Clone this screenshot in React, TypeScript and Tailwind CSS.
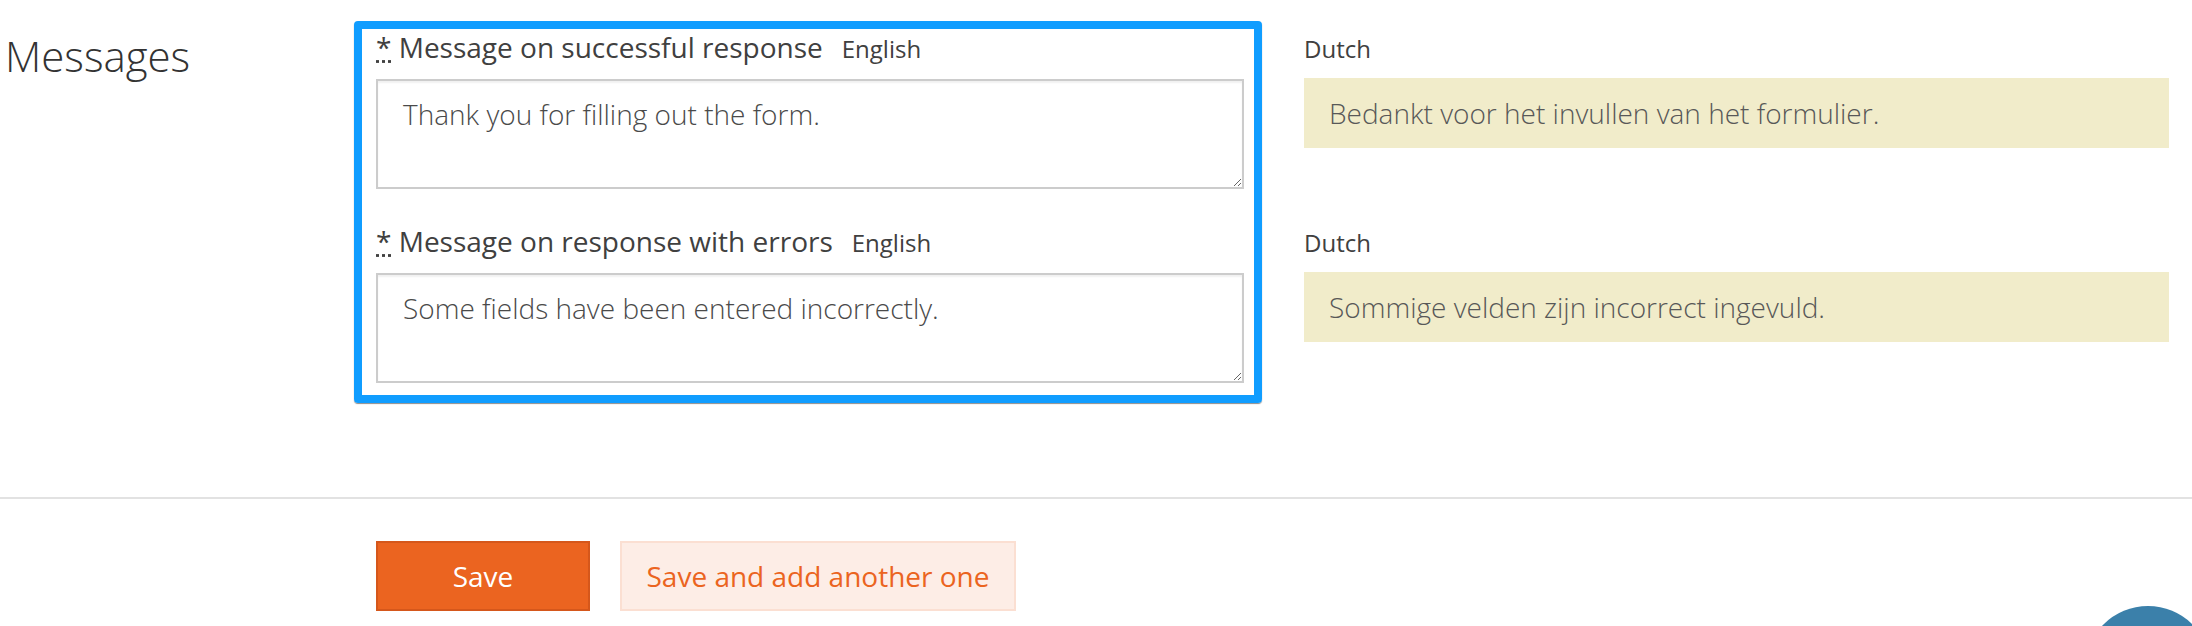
import React from 'react';

const FONT = "font-['Open_Sans','Liberation_Sans',sans-serif]";

type Field = {
  label: string;
  english: string;
  dutch: string;
};

const FIELDS: Field[] = [
  {
    label: 'Message on successful response',
    english: 'Thank you for filling out the form.',
    dutch: 'Bedankt voor het invullen van het formulier.',
  },
  {
    label: 'Message on response with errors',
    english: 'Some fields have been entered incorrectly.',
    dutch: 'Sommige velden zijn incorrect ingevuld.',
  },
];

const EnglishField: React.FC<{ field: Field }> = ({ field }) => (
  <div className="h-[160px] flex flex-col">
    <div className="h-[36px] flex items-baseline leading-[36px] text-[#404040] whitespace-nowrap">
      <span className="text-[28px]">
        <abbr title="required" className="underline decoration-dotted">*</abbr> {field.label}
      </span>
      <span className="text-[24px] ml-[19px]">English</span>
    </div>
    <textarea
      defaultValue={field.english}
      className="mt-[14px] w-[868px] h-[110px] border-2 border-[#cccccc] bg-white px-[25px] pt-[15px] text-[28px] leading-[37px] font-light text-[#4a4a4a] shadow-[inset_0_2px_2px_rgba(0,0,0,0.06)] outline-none"
    />
  </div>
);

const DutchField: React.FC<{ field: Field }> = ({ field }) => (
  <div className="h-[160px] flex flex-col">
    <div className="h-[36px] text-[24px] leading-[39px] text-[#404040]">Dutch</div>
    <div className="mt-[13px] h-[70px] bg-[#f1ecca] pl-[25px] pt-[17px] text-[28px] leading-[37px] font-light text-[#585858] whitespace-nowrap">
      {field.dutch}
    </div>
  </div>
);

const App: React.FC = () => {
  return (
    <div className={`relative h-[626px] w-full overflow-hidden bg-white ${FONT}`}>
      <div className="flex pt-[21px]">
        <div className="w-[354px] shrink-0 pl-[5px]">
          <h2 className="mt-[6px] text-[42px] leading-[57px] font-light text-[#333]">Messages</h2>
        </div>

        <div className="shrink-0 rounded-[4px] border-[8px] border-[#109dff] pl-[14px] pr-[10px] pb-[12px] shadow-[0_1px_1px_rgba(0,0,0,0.45)]">
          <div className="flex flex-col gap-[34px]">
            {FIELDS.map((f) => (
              <EnglishField key={f.label} field={f} />
            ))}
          </div>
        </div>

        <div className="ml-[42px] mt-[8px] w-[865px] shrink-0 flex flex-col gap-[34px]">
          {FIELDS.map((f) => (
            <DutchField key={f.label} field={f} />
          ))}
        </div>
      </div>

      <div className="mt-[94px] border-t-2 border-[#e2e2e2] pt-[42px] pl-[376px] flex gap-[30px]">
        <button className="w-[214px] h-[70px] bg-[#eb6420] border-2 border-[#d5571b] text-white text-[28px]">
          Save
        </button>
        <button className="w-[396px] h-[70px] bg-[#fdede6] border-2 border-[#fbdfd2] text-[#eb6420] text-[28px]">
          Save and add another one
        </button>
      </div>

      {/* floating help bubble, mostly off screen */}
      <div className="absolute right-[-19px] bottom-[-106px] w-[126px] h-[126px] rounded-full bg-[#3b80aa]" />
    </div>
  );
};

export default App;
